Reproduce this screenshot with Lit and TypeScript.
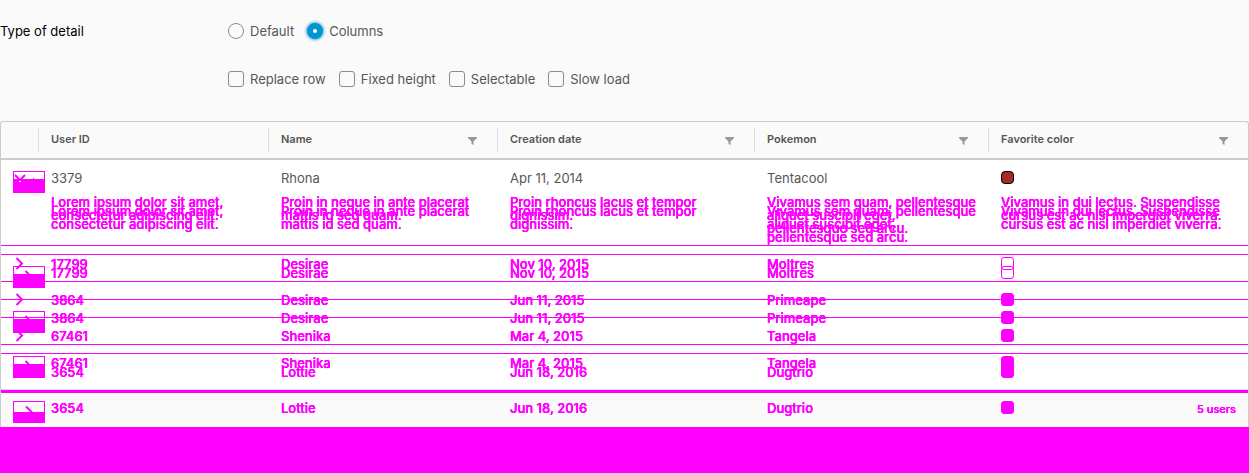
import { LitElement, html, css, svg, nothing } from "lit";
import { customElement } from "lit/decorators.js";

const PINK = "#ff00ff";

interface User {
  id: string;
  name: string;
  date: string;
  pokemon: string;
}

const users: User[] = [
  { id: "17799", name: "Desirae", date: "Nov 10, 2015", pokemon: "Moltres" },
  { id: "3864", name: "Desirae", date: "Jun 11, 2015", pokemon: "Primeape" },
  { id: "67461", name: "Shenika", date: "Mar 4, 2015", pokemon: "Tangela" },
  { id: "3654", name: "Lottie", date: "Jun 18, 2016", pokemon: "Dugtrio" },
];

const details: string[][] = [
  ["Lorem ipsum dolor sit amet,", "consectetur adipiscing elit."],
  ["Proin in neque in ante placerat", "mattis id sed quam."],
  ["Proin rhoncus lacus et tempor", "dignissim."],
  ["Vivamus sem quam, pellentesque", "aliquet suscipit eget,", "pellentesque sed arcu."],
  ["Vivamus in dui lectus. Suspendisse", "cursus est ac nisl imperdiet viverra."],
];

const headers = ["User ID", "Name", "Creation date", "Pokemon", "Favorite color"];

@customElement("app-root")
export class AppRoot extends LitElement {
  static styles = css`
    :host {
      display: flex;
      flex-direction: column;
      min-height: 100vh;
      background: #fafafa;
      color: #565656;
      font: 13px/18px Inter, "Open Sans", sans-serif;
    }
    * { box-sizing: border-box; }
    .form {
      display: grid;
      grid-template-columns: 228px 1fr;
      row-gap: 30px;
      padding: 22px 0 33px;
    }
    .legend { color: #000; }
    .controls { grid-column: 2; display: flex; gap: 13px; }
    .choice { display: flex; align-items: center; gap: 6px; white-space: nowrap; }
    .choice input {
      appearance: none;
      width: 16px;
      height: 16px;
      margin: 0;
      border: 1px solid #8c8c8c;
      border-radius: 3px;
    }
    .choice input[type="radio"] { border-radius: 50%; }
    .choice input[type="radio"]:checked {
      border: 6px solid #0095d3;
      background: #fff;
      box-shadow: 0 0 3px 1px #49afd9;
    }
    .grid {
      display: grid;
      grid-template-columns: minmax(0, 1fr);
      border: 1px solid #ccc;
      border-bottom: 0;
      border-radius: 3px 3px 0 0;
    }
    .head, .layer { display: block; grid-column: 1; }
    .row {
      display: grid;
      grid-template-columns: 37px 230fr 229fr 257fr 234fr 260fr;
    }
    th, td { display: block; padding: 0; text-align: left; white-space: nowrap; min-width: 0; }
    .head { border-bottom: 2px solid #ccc; padding: 6px 0; }
    .title {
      display: flex;
      justify-content: space-between;
      align-items: center;
      height: 24px;
      padding: 0 20px 2px 12px;
      border-left: 1px solid #ddd;
      font-size: 11px;
      font-weight: 600;
    }
    .filter { display: flex; padding: 4px 0 0; border: 0; background: none; }
    .compact { grid-row: 2; background: #fff; }
    .spaced { grid-row: 2 / 4; z-index: 1; }
    .user { height: 36px; border-bottom: 1px solid #ff00ff; }
    .spaced .user { height: 45px; }
    .user.first { border-bottom: 0; }
    .compact .user:last-child { border-bottom-color: #ddd; }
    .spaced .user:nth-last-child(2) { border-bottom-color: #ddd; }
    .spaced .user:last-child { height: 36px; border-bottom: 0; }
    .user td { padding: 9px 0 0 13px; }
    .user .toggle { padding: 11px 0 0 12px; }
    .user .swatch { padding-top: 11px; }
    .changed { color: #ff00ff; font-weight: 500; text-shadow: 0 0 0 #ff00ff, 0 0 0 #ff00ff; }
    .detail { height: 50px; border-bottom: 1px solid #ff00ff; line-height: 13px; }
    .detail td { padding-left: 13px; }
    .line { display: block; }
    .caret { display: block; padding: 0; border: 0; background: none; width: 32px; height: 22px; }
    svg { display: block; overflow: visible; }
    .color {
      display: block;
      width: 13px;
      height: 13px;
      border: 1px solid #ff00ff;
      border-radius: 3px;
      background: #ff00ff;
    }
    .color.hollow { background: none; }
    .color.brown { border-color: #000; background: #a52a2a; border-radius: 4px; }
    .foot {
      display: flex;
      grid-row: 3;
      grid-column: 1;
      justify-content: flex-end;
      border-top: 3px solid #ff00ff;
      background: #fafafa;
    }
    .foot .row { display: block; }
    .count { padding: 7px 12px 9px; font-size: 11px; line-height: 18px; }
    .rest { flex: 1; background: #ff00ff; }
  `;

  private caret(spaced: boolean, down: boolean, tall = false) {
    const art = spaced
      ? svg`<rect x="0.5" y="0.5" width="31" height="21" fill="none" stroke=${PINK}/>
          <rect x="0" y=${tall ? 11 : 8} width="32" height=${tall ? 11 : 14} fill=${PINK}/>
          ${tall
            ? svg`<path d="M13 5.500L19 11.500" stroke=${PINK} stroke-width="2"/>`
            : down
              ? svg`<path d="M20 8v-1h1v1M5.500 10.500h3" fill=${PINK} stroke="#fff" stroke-width="0"/><rect x="6" y="10" width="2" height="1" fill="#fff"/>`
              : svg`<path d="M12.500 5L16 8.500" stroke=${PINK} stroke-width="2"/>`}`
      : down
        ? svg`<path d="M2 4L7 9L12 4" fill="none" stroke=${PINK} stroke-width="2"/>`
        : svg`<path d="M3.500 1L9 6.500L3.500 12" fill="none" stroke=${PINK} stroke-width="2"/>`;
    return html`<button class="caret" aria-label="Toggle detail">
      <svg width="32" height="22" viewBox="0 0 32 22">${art}</svg>
    </button>`;
  }

  private layer(spaced: boolean) {
    return html`<tbody class="layer ${spaced ? "spaced" : "compact"}">
      <tr class="row user first">
        <td class="toggle">${this.caret(spaced, true)}</td>
        ${spaced
          ? nothing
          : html`<td>3379</td><td>Rhona</td><td>Apr 11, 2014</td><td>Tentacool</td>
              <td class="swatch"><span class="color brown"></span></td>`}
      </tr>
      <tr class="row detail changed">
        <td></td>
        ${details.map((d) => html`<td>${d.map((l) => html`<span class="line">${l}</span>`)}</td>`)}
      </tr>
      ${users.map(
        (u, i) => html`<tr class="row user changed">
          <td class="toggle">${this.caret(spaced, false, i === 3)}</td>
          <td>${u.id}</td>
          <td>${u.name}</td>
          <td>${u.date}</td>
          <td>${u.pokemon}</td>
          <td class="swatch"><span class="color ${i === 0 ? "hollow" : ""}"></span></td>
        </tr>`
      )}
    </tbody>`;
  }

  render() {
    return html`
      <div class="form">
        <span class="legend" id="kind">Type of detail</span>
        <div class="controls" role="radiogroup" aria-labelledby="kind">
          <label class="choice"><input type="radio" name="kind" />Default</label>
          <label class="choice"><input type="radio" name="kind" checked />Columns</label>
        </div>
        <div class="controls">
          ${["Replace row", "Fixed height", "Selectable", "Slow load"].map(
            (t) => html`<label class="choice"><input type="checkbox" />${t}</label>`
          )}
        </div>
      </div>
      <table class="grid">
        <thead class="head">
          <tr class="row">
            <th></th>
            ${headers.map(
              (h, i) => html`<th class="title">${h}${i
                ? html`<button class="filter" aria-label="Filter">
                    <svg width="9" height="8" viewBox="0 0 9 8"><path d="M0 0H9V1L5.500 4.500V8L3.500 7V4.500L0 1z" fill="#999"/></svg>
                  </button>`
                : nothing}</th>`
            )}
          </tr>
        </thead>
        ${this.layer(false)}
        <tfoot class="foot">
          <tr class="row"><td class="count changed">5 users</td></tr>
        </tfoot>
        ${this.layer(true)}
      </table>
      <div class="rest"></div>
    `;
  }
}
